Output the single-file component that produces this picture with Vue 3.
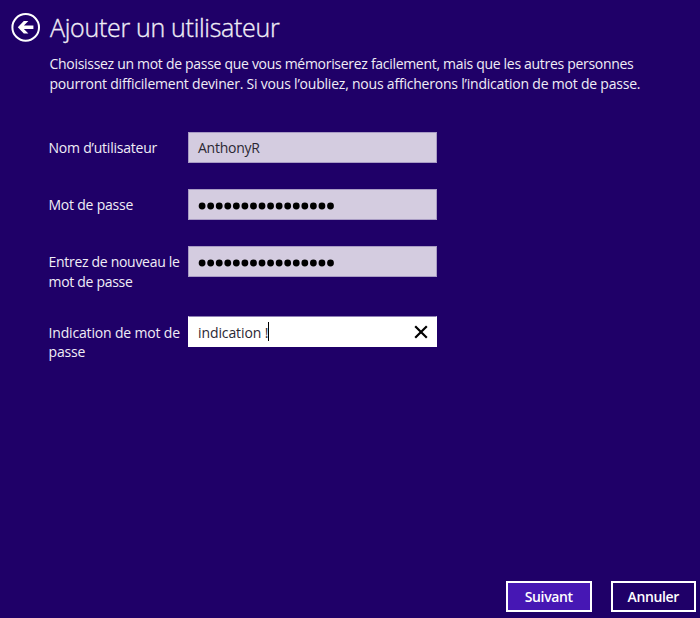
<script setup>
import { ref } from 'vue'

const fields = ref([
  { id: 'user', lines: ['Nom d’utilisateur'], value: 'AnthonyR' },
  { id: 'pass', lines: ['Mot de passe'], dots: 16 },
  { id: 'again', lines: ['Entrez de nouveau le', 'mot de passe'], dots: 16 },
  { id: 'hint', lines: ['Indication de mot de', 'passe'], value: 'indication !', active: true },
])
</script>

<template>
  <main class="page">
    <header class="header">
      <svg class="back" width="30" height="30" viewBox="0 0 30 30">
        <circle cx="14.7" cy="15.4" r="13.3" fill="none" stroke="#fff" stroke-width="2" />
        <path d="M6.8 15.2 L12.8 9 H17.4 L12.9 13.4 H22.4 V17 H12.9 L17.4 21.4 H12.8 Z" fill="#fff" />
      </svg>
      <h1 class="title">Ajouter un utilisateur</h1>
    </header>
    <p class="intro">
      <span class="line first">Choisissez un mot de passe que vous mémoriserez facilement, mais que les autres personnes</span>
      <span class="line second">pourront difficilement deviner. Si vous l’oubliez, nous afficherons l’indication de mot de passe.</span>
    </p>
    <form class="form" @submit.prevent>
      <div v-for="f in fields" :key="f.id" class="row" :class="f.id">
        <label class="label">
          <span v-for="l in f.lines" :key="l" class="line">{{ l }}</span>
        </label>
        <div class="field" :class="{ active: f.active }">
          <svg v-if="f.dots" class="dots" width="140" height="8" viewBox="0 0 140 8">
            <circle v-for="n in f.dots" :key="n" :cx="4.1 + (n - 1) * 8.56" cy="4" r="3.4" />
          </svg>
          <span v-else class="value">{{ f.value }}</span>
          <i v-if="f.active" class="caret"></i>
          <svg v-if="f.active" class="clear" width="14" height="14" viewBox="0 0 14 14">
            <path d="M1.2 1.2 L12.8 12.8 M12.8 1.2 L1.2 12.8" stroke="#000" stroke-width="2.2" fill="none" />
          </svg>
        </div>
      </div>
    </form>
    <footer class="actions">
      <button class="btn primary">Suivant</button>
      <button class="btn">Annuler</button>
    </footer>
  </main>
</template>

<style>
body {
  margin: 0;
  background: #1f0068;
}
</style>

<style scoped>
.page {
  box-sizing: border-box;
  width: 700px;
  height: 618px;
  display: flex;
  flex-direction: column;
  overflow: hidden;
  background: #1f0068;
  color: #f0edf6;
  font-family: "Open Sans", "Noto Sans", sans-serif;
  font-size: 14px;
}
.header {
  display: flex;
  align-items: center;
  height: 54px;
  padding-left: 11px;
}
.back {
  flex: none;
}
.title {
  margin: 0 0 0 9px;
  font-size: 25px;
  font-weight: 300;
  line-height: 54px;
  letter-spacing: -0.3px;
  -webkit-text-stroke: 0.35px currentColor;
  white-space: nowrap;
}
.intro {
  margin: 0;
  padding-left: 49.5px;
  height: 78px;
}
.line {
  display: block;
  line-height: 19.5px;
  white-space: nowrap;
}
.intro .first {
  letter-spacing: -0.3px;
}
.intro .second {
  letter-spacing: -0.21px;
}
.form {
  flex: 1;
}
.row {
  display: flex;
  height: 57px;
  padding-left: 48.5px;
}
.row.again {
  height: 70.4px;
}
.label {
  width: 139.5px;
  padding-top: 6px;
  letter-spacing: -0.22px;
}
.again .label {
  letter-spacing: -0.3px;
}
.hint .label {
  padding-top: 6.4px;
  letter-spacing: -0.17px;
}
.field {
  box-sizing: border-box;
  display: flex;
  align-items: center;
  width: 248.7px;
  height: 31px;
  padding: 0 8px 0 9px;
  border: 1px solid #a89bc4;
  background: #d4cce0;
  color: #2b2833;
}
.field.active {
  background: #fff;
  border-color: #fff;
  border-top-color: #8e80b4;
}
.value {
  letter-spacing: -0.25px;
  white-space: nowrap;
}
.active .value {
  padding-top: 1px;
  letter-spacing: -0.1px;
}
.dots {
  margin-top: 3px;
  fill: #000;
}
.caret {
  width: 1px;
  height: 19px;
  background: #000;
}
.clear {
  margin-left: auto;
}
.actions {
  display: flex;
  gap: 19px;
  justify-content: flex-end;
  padding: 0 4px 6px 0;
}
.btn {
  box-sizing: border-box;
  width: 85.5px;
  height: 31px;
  padding: 0;
  border: 2px solid #fff;
  background: transparent;
  color: #fff;
  font-family: inherit;
  font-size: 14px;
  font-weight: 600;
  line-height: 27px;
  letter-spacing: -0.35px;
}
.btn.primary {
  background: #4617b4;
}
</style>
